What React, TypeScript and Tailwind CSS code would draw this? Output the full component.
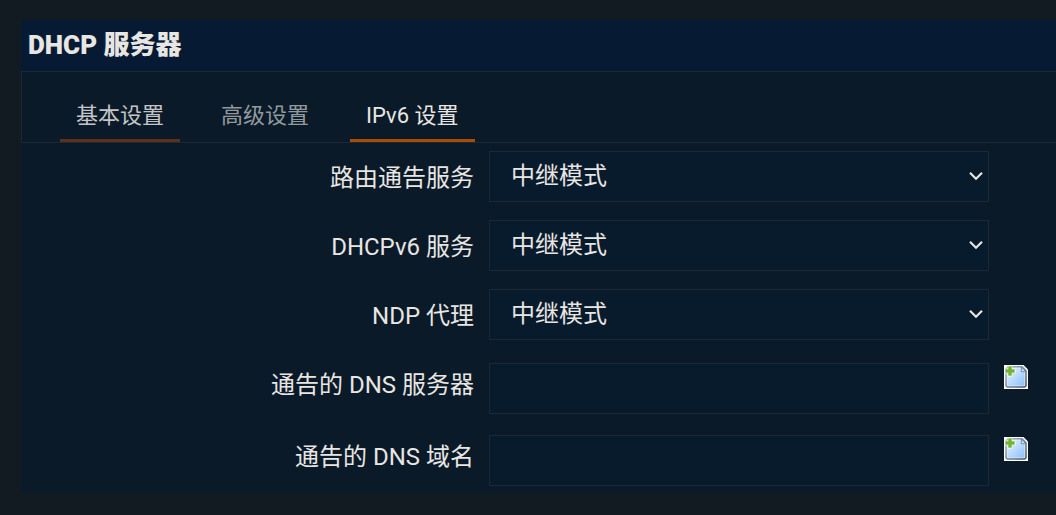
import { useState } from "react";

const tabs = [
  { label: "基本设置", tone: "text-[#c3c5c7] border-[#5f3217]" },
  { label: "高级设置", tone: "text-[#929a9f] border-transparent" },
  { label: "IPv6 设置", tone: "text-[#e8e6e3] border-[#a84b06]" },
];

const selects = [
  { id: "ra", label: "路由通告服务" },
  { id: "dhcpv6", label: "DHCPv6 服务" },
  { id: "ndp", label: "NDP 代理" },
];

const lists = [
  { id: "dns", label: "通告的 DNS 服务器" },
  { id: "domain", label: "通告的 DNS 域名" },
];

const fieldClass =
  "block h-[51px] w-full appearance-none border border-[#1c2932] bg-[#081b2c] px-[21px] pb-px text-2xl text-[#e8e6e3] outline-none";

function AddIcon() {
  return (
    <svg width="24" height="24" viewBox="0 0 24 24" aria-hidden="true">
      <defs>
        <linearGradient id="sheet" x1="0" y1="0" x2="1" y2="1">
          <stop offset="0" stopColor="#e6f2ff" />
          <stop offset="1" stopColor="#8cc2fb" />
        </linearGradient>
        <linearGradient id="edge" x1="0" y1="0" x2="1" y2="1">
          <stop offset="0" stopColor="#a9b8cc" />
          <stop offset="1" stopColor="#44506a" />
        </linearGradient>
      </defs>
      <path d="M0 0H19.5L24 4.5V24H0Z" fill="#fff" />
      <path d="M4 1.8H18L22 5.8V20Q22 22 20 22H4Q2 22 2 20V4Z" fill="#dfe9f4" stroke="url(#edge)" strokeWidth="1.5" />
      <path d="M4 3.6H16.6L20.4 7V19.2Q20.4 20.4 19.2 20.4H4.8Q3.6 20.4 3.6 19.2Z" fill="url(#sheet)" />
      <path d="M17.4 2.2L21.8 6.8L17.4 6.6Z" fill="#d3e6fa" stroke="#5d7da3" strokeWidth="0.8" />
      <path d="M3.8 0.5H8.2V3.8H11.5V8.2H8.2V11.5H3.8V8.2H0.5V3.8H3.8Z" fill="#fff" />
      <path d="M4.5 1.6H7.5V4.5H10.4V7.5H7.5V10.4H4.5V7.5H1.6V4.5H4.5Z" fill="#70b32d" stroke="#70b32d" strokeWidth="0.4" />
    </svg>
  );
}

export default function App() {
  const [active, setActive] = useState(2);
  return (
    <main className="min-h-screen bg-[#121b22] pt-5 pb-[22px] pl-[21px] font-[Roboto,'Noto_Sans_CJK_SC',sans-serif] text-[#e8e6e3]">
      <section className="bg-[#0b1a28] pb-[7px]">
        <h1 className="flex h-[51px] items-center bg-[#061a33] px-[7px] text-[26px] font-black">DHCP 服务器</h1>
        <nav role="tablist" className="flex items-end gap-[25px] border-y border-l border-[#1c2932] pt-[18px] pl-[38px]">
          {tabs.map((tab, i) => (
            <button
              key={tab.label}
              type="button"
              role="tab"
              aria-selected={active === i}
              onClick={() => setActive(i)}
              className={`h-[52px] border-b-[3px] px-4 pt-0.5 text-[22px] whitespace-nowrap ${tab.tone}`}
            >
              {tab.label}
            </button>
          ))}
        </nav>
        <form className="pt-2">
          <div className="flex flex-col gap-[18px]">
            {selects.map((row) => (
              <div key={row.id} className="flex items-center gap-[15px] pr-[67px]">
                <label htmlFor={row.id} className="flex-1 pt-0.5 text-right text-2xl">{row.label}</label>
                <div className="relative w-[500px]">
                  <select id={row.id} className={fieldClass} defaultValue="relay">
                    <option value="relay">中继模式</option>
                    <option value="server">服务器模式</option>
                    <option value="off">已禁用</option>
                  </select>
                  <svg className="pointer-events-none absolute top-5 right-[5px]" width="16" height="10" viewBox="0 0 16 10" fill="none" aria-hidden="true">
                    <path d="M2 1.8L8 7.8L14 1.8" stroke="#e8e6e3" strokeWidth="2.2" />
                  </svg>
                </div>
              </div>
            ))}
          </div>
          <div className="flex flex-col gap-[21px] pt-[23px]">
            {lists.map((row) => (
              <div key={row.id} className="flex items-start gap-[15px] pr-7">
                <label htmlFor={row.id} className="flex-1 pt-1.5 text-right text-2xl">{row.label}</label>
                <input id={row.id} type="text" className={`${fieldClass} max-w-[500px]`} />
                <button type="button" aria-label="添加" className="mt-0.5 shrink-0">
                  <AddIcon />
                </button>
              </div>
            ))}
          </div>
        </form>
      </section>
    </main>
  );
}
